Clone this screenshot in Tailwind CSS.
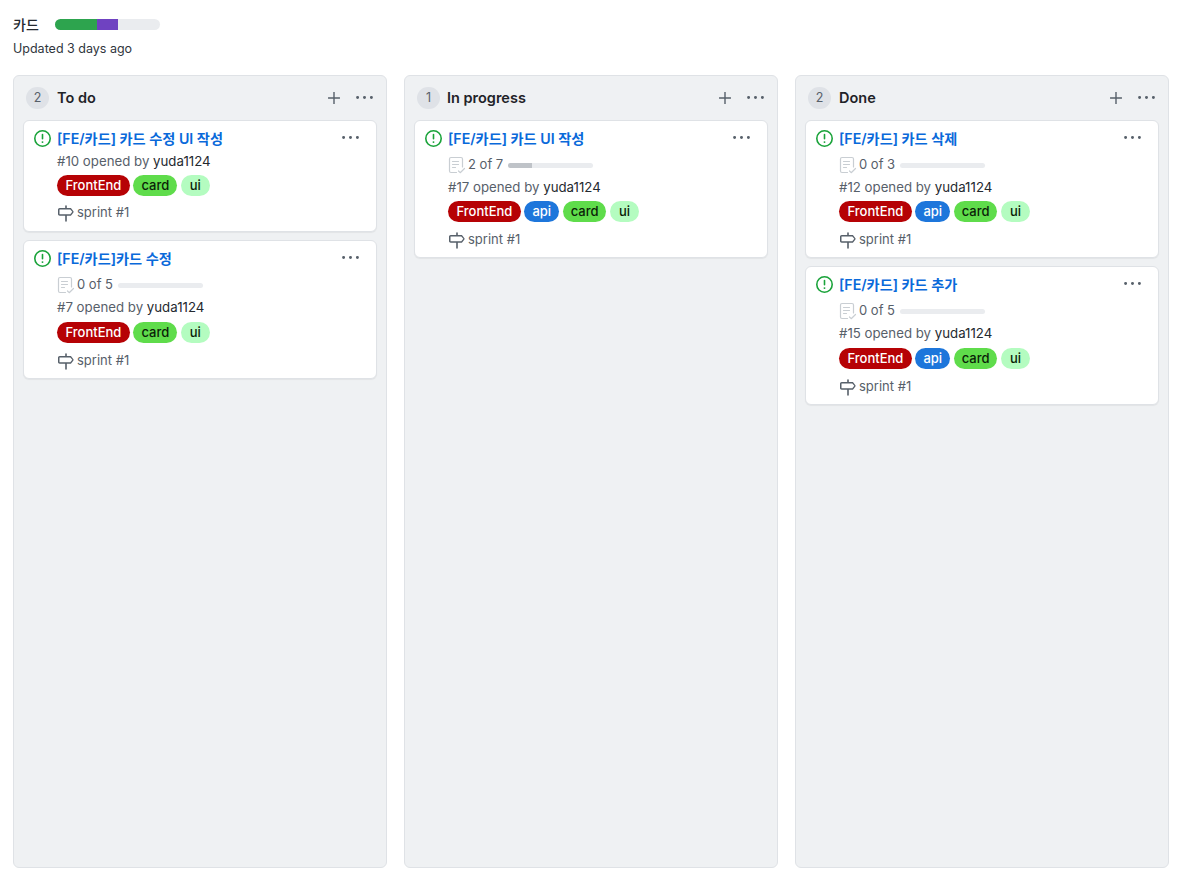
<!DOCTYPE html>
<html lang="ko">
<head>
    <meta charset="UTF-8">
    <title>카드</title>
    <script src="https://cdn.jsdelivr.net/npm/@tailwindcss/browser@4"></script>
</head>
<body class="h-[880px] overflow-hidden bg-white text-[#24292f] font-['Inter','Noto_Sans_CJK_KR',sans-serif] antialiased">
    <svg class="hidden">
        <symbol id="issue" viewBox="0 0 16 16"><path fill="currentColor" d="M8 0a8 8 0 1 1 0 16A8 8 0 0 1 8 0ZM1.500 8a6.500 6.500 0 1 0 13 0 6.500 6.500 0 0 0-13 0Zm5.600 3.400a.9.9 0 1 1 1.800 0 .9.9 0 0 1-1.800 0ZM7.250 4.250a.75.75 0 0 1 1.500 0v4a.75.75 0 0 1-1.500 0Z"/></symbol>
        <symbol id="kebab" viewBox="0 0 16 16"><path fill="currentColor" d="M8 9.400a1.400 1.400 0 1 0 0-2.800 1.400 1.400 0 0 0 0 2.800ZM1.500 9.400a1.400 1.400 0 1 0 0-2.800 1.400 1.400 0 0 0 0 2.800Zm13 0a1.400 1.400 0 1 0 0-2.800 1.400 1.400 0 0 0 0 2.800Z"/></symbol>
        <symbol id="plus" viewBox="0 0 16 16"><path fill="currentColor" d="M7.200 1.200h1.600v6h6v1.600h-6v6H7.200v-6h-6V7.200h6Z"/></symbol>
        <symbol id="milestone" viewBox="0 0 16 16"><path fill="currentColor" fill-rule="evenodd" d="M7.200.6a.8.8 0 0 1 1.600 0V2.500h3.600c.3 0 .5.1.7.3l2.300 3c.3.3.3.8 0 1.100l-2.300 3c-.2.2-.4.3-.7.3H8.800v5.200a.8.8 0 0 1-1.600 0v-5.200H1.700C.8 10.200 0 9.400 0 8.500V4.200c0-.9.8-1.700 1.700-1.700h5.500ZM1.700 4c-.1 0-.2.1-.2.2v4.300c0 .1.100.2.200.2h10.600l2-2.350-2-2.350Z"/></symbol>
        <symbol id="tasks" viewBox="0 0 18 18"><path fill="none" stroke="currentColor" stroke-width="1.200" stroke-linecap="round" stroke-linejoin="round" d="M8.500 16.500H3c-.8 0-1.500-.7-1.500-1.500V3c0-.8.7-1.500 1.500-1.500h10c.8 0 1.500.7 1.500 1.500v8M4.500 5.500h6M4.500 8.500h6M4.500 11.500h3M10.500 15l1.700 1.700 4.300-4.200"/></symbol>
    </svg>

    <div class="h-[75px] px-[13px]">
        <div class="flex items-center h-[49px] pb-[1px]">
            <h3 class="text-[14px] font-medium w-[42px]">카드</h3>
            <div class="flex w-[105px] h-[11px] rounded-full overflow-hidden bg-[#eaecef]">
                <span class="w-[42px] bg-[#2da44e]"></span>
                <span class="w-[21px] bg-[#6f42c1]"></span>
            </div>
        </div>
        <p class="text-[12.5px] leading-[16px] text-[#30363d] -mt-[8px]">Updated 3 days ago</p>
    </div>

    <div class="flex gap-[17px] px-[13px]">

        <!-- To do -->
        <section class="shrink-0 w-[374px] h-[793px] bg-[#eff1f3] border border-[#dfe2e6] rounded-md">
            <header class="flex items-center h-[44px] pl-[12px] pr-[13px]">
                <span class="flex items-center justify-center w-[23px] h-[22px] rounded-full bg-[#dfe2e7] text-[12.5px] text-[#57606a]">2</span>
                <h4 class="ml-[8px] text-[14.5px] font-semibold text-[#1f2328]">To do</h4>
                <svg class="ml-auto w-[14px] h-[14px] text-[#57606a]"><use href="#plus"/></svg>
                <svg class="ml-[15px] -mt-[2px] w-[17px] h-[17px] text-[#57606a]"><use href="#kebab"/></svg>
            </header>
            <div class="flex flex-col gap-[8px] px-[9px]">
                <article class="relative h-[112px] bg-white border border-[#dfe2e6] rounded-md shadow-[0_1px_1px_rgba(31,35,40,0.06)] pl-[33px] pt-[7px]">
                    <svg class="absolute left-[10px] top-[9px] w-[17px] h-[17px] text-[#1aa33a]"><use href="#issue"/></svg>
                    <svg class="absolute right-[17px] top-[8px] w-[17px] h-[17px] text-[#57606a]"><use href="#kebab"/></svg>
                    <a class="block h-[21px] leading-[21px] text-[14.2px] font-semibold text-[#0969da]">[FE/카드] 카드 수정 UI 작성</a>
                    <p class="mt-[2px] h-[20px] leading-[20px] text-[13.25px] text-[#57606a]">#10 opened by <span class="text-[#24292f]">yuda1124</span></p>
                    <div class="flex gap-[3.5px] mt-[4px]">
                        <span class="flex items-center h-[21px] px-[8.5px] rounded-full bg-[#b60205] text-white text-[13px] font-medium">FrontEnd</span>
                        <span class="flex items-center h-[21px] px-[8px] rounded-full bg-[#5fdc4b] text-[#0b1f08] text-[13px] font-medium">card</span>
                        <span class="flex items-center h-[21px] px-[9px] rounded-full bg-[#b4fcc0] text-[#0b1f08] text-[13px] font-medium">ui</span>
                    </div>
                    <div class="flex items-center gap-[3px] mt-[8px] h-[18px] text-[13px] text-[#57606a]"><svg class="ml-[1px] w-[16px] h-[17px] text-[#57606a]"><use href="#milestone"/></svg>sprint #1</div>
                </article>
                <article class="relative h-[139px] bg-white border border-[#dfe2e6] rounded-md shadow-[0_1px_1px_rgba(31,35,40,0.06)] pl-[33px] pt-[7px]">
                    <svg class="absolute left-[10px] top-[9px] w-[17px] h-[17px] text-[#1aa33a]"><use href="#issue"/></svg>
                    <svg class="absolute right-[17px] top-[8px] w-[17px] h-[17px] text-[#57606a]"><use href="#kebab"/></svg>
                    <a class="block h-[21px] leading-[21px] text-[14.2px] font-semibold text-[#0969da]">[FE/카드]카드 수정</a>
                    <div class="flex items-center mt-[6px] h-[20px] text-[13px] text-[#57606a]">
                        <svg class="w-[18px] h-[18px] text-[#c9ced3]"><use href="#tasks"/></svg>
                        <span class="ml-[2px] w-[41px]">0 of 5</span>
                        <span class="w-[85px] h-[5px] rounded-full bg-[#eaecef]"></span>
                    </div>
                    <p class="mt-[2px] h-[20px] leading-[20px] text-[13.25px] text-[#57606a]">#7 opened by <span class="text-[#24292f]">yuda1124</span></p>
                    <div class="flex gap-[3.5px] mt-[5px]">
                        <span class="flex items-center h-[21px] px-[8.5px] rounded-full bg-[#b60205] text-white text-[13px] font-medium">FrontEnd</span>
                        <span class="flex items-center h-[21px] px-[8px] rounded-full bg-[#5fdc4b] text-[#0b1f08] text-[13px] font-medium">card</span>
                        <span class="flex items-center h-[21px] px-[9px] rounded-full bg-[#b4fcc0] text-[#0b1f08] text-[13px] font-medium">ui</span>
                    </div>
                    <div class="flex items-center gap-[3px] mt-[9px] h-[18px] text-[13px] text-[#57606a]"><svg class="ml-[1px] w-[16px] h-[17px] text-[#57606a]"><use href="#milestone"/></svg>sprint #1</div>
                </article>
            </div>
        </section>

        <!-- In progress -->
        <section class="shrink-0 w-[374px] h-[793px] bg-[#eff1f3] border border-[#dfe2e6] rounded-md">
            <header class="flex items-center h-[44px] pl-[12px] pr-[13px]">
                <span class="flex items-center justify-center w-[23px] h-[22px] rounded-full bg-[#dfe2e7] text-[12.5px] text-[#57606a]">1</span>
                <h4 class="ml-[7px] text-[14.5px] font-semibold text-[#1f2328]">In progress</h4>
                <svg class="ml-auto w-[14px] h-[14px] text-[#57606a]"><use href="#plus"/></svg>
                <svg class="ml-[15px] -mt-[2px] w-[17px] h-[17px] text-[#57606a]"><use href="#kebab"/></svg>
            </header>
            <div class="flex flex-col gap-[8px] px-[9px]">
                <article class="relative h-[138px] bg-white border border-[#dfe2e6] rounded-md shadow-[0_1px_1px_rgba(31,35,40,0.06)] pl-[33px] pt-[7px]">
                    <svg class="absolute left-[10px] top-[9px] w-[17px] h-[17px] text-[#1aa33a]"><use href="#issue"/></svg>
                    <svg class="absolute right-[17px] top-[8px] w-[17px] h-[17px] text-[#57606a]"><use href="#kebab"/></svg>
                    <a class="block h-[21px] leading-[21px] text-[14.2px] font-semibold text-[#0969da]">[FE/카드] 카드 UI 작성</a>
                    <div class="flex items-center mt-[6px] h-[20px] text-[13px] text-[#57606a]">
                        <svg class="w-[18px] h-[18px] text-[#c9ced3]"><use href="#tasks"/></svg>
                        <span class="ml-[2px] w-[40px]">2 of 7</span>
                        <span class="flex w-[85px] h-[5px] rounded-full overflow-hidden bg-[#eaecef]"><span class="w-[24px] bg-[#bfc3c8]"></span></span>
                    </div>
                    <p class="mt-[2px] h-[20px] leading-[20px] text-[13.25px] text-[#57606a]">#17 opened by <span class="text-[#24292f]">yuda1124</span></p>
                    <div class="flex gap-[3.5px] mt-[4px]">
                        <span class="flex items-center h-[21px] px-[8.5px] rounded-full bg-[#b60205] text-white text-[13px] font-medium">FrontEnd</span>
                        <span class="flex items-center h-[21px] px-[8px] rounded-full bg-[#1d76db] text-white text-[13px] font-medium">api</span>
                        <span class="flex items-center h-[21px] px-[8px] rounded-full bg-[#5fdc4b] text-[#0b1f08] text-[13px] font-medium">card</span>
                        <span class="flex items-center h-[21px] px-[9px] rounded-full bg-[#b4fcc0] text-[#0b1f08] text-[13px] font-medium">ui</span>
                    </div>
                    <div class="flex items-center gap-[3px] mt-[9px] h-[18px] text-[13px] text-[#57606a]"><svg class="ml-[1px] w-[16px] h-[17px] text-[#57606a]"><use href="#milestone"/></svg>sprint #1</div>
                </article>
            </div>
        </section>

        <!-- Done -->
        <section class="shrink-0 w-[374px] h-[793px] bg-[#eff1f3] border border-[#dfe2e6] rounded-md">
            <header class="flex items-center h-[44px] pl-[12px] pr-[13px]">
                <span class="flex items-center justify-center w-[23px] h-[22px] rounded-full bg-[#dfe2e7] text-[12.5px] text-[#57606a]">2</span>
                <h4 class="ml-[8px] text-[14.5px] font-semibold text-[#1f2328]">Done</h4>
                <svg class="ml-auto w-[14px] h-[14px] text-[#57606a]"><use href="#plus"/></svg>
                <svg class="ml-[15px] -mt-[2px] w-[17px] h-[17px] text-[#57606a]"><use href="#kebab"/></svg>
            </header>
            <div class="flex flex-col gap-[8px] px-[9px]">
                <article class="relative h-[138px] bg-white border border-[#dfe2e6] rounded-md shadow-[0_1px_1px_rgba(31,35,40,0.06)] pl-[33px] pt-[7px]">
                    <svg class="absolute left-[10px] top-[9px] w-[17px] h-[17px] text-[#1aa33a]"><use href="#issue"/></svg>
                    <svg class="absolute right-[17px] top-[8px] w-[17px] h-[17px] text-[#57606a]"><use href="#kebab"/></svg>
                    <a class="block h-[21px] leading-[21px] text-[14.2px] font-semibold text-[#0969da]">[FE/카드] 카드 삭제</a>
                    <div class="flex items-center mt-[6px] h-[20px] text-[13px] text-[#57606a]">
                        <svg class="w-[18px] h-[18px] text-[#c9ced3]"><use href="#tasks"/></svg>
                        <span class="ml-[2px] w-[41px]">0 of 3</span>
                        <span class="w-[85px] h-[5px] rounded-full bg-[#eaecef]"></span>
                    </div>
                    <p class="mt-[2px] h-[20px] leading-[20px] text-[13.25px] text-[#57606a]">#12 opened by <span class="text-[#24292f]">yuda1124</span></p>
                    <div class="flex gap-[3.5px] mt-[4px]">
                        <span class="flex items-center h-[21px] px-[8.5px] rounded-full bg-[#b60205] text-white text-[13px] font-medium">FrontEnd</span>
                        <span class="flex items-center h-[21px] px-[8px] rounded-full bg-[#1d76db] text-white text-[13px] font-medium">api</span>
                        <span class="flex items-center h-[21px] px-[8px] rounded-full bg-[#5fdc4b] text-[#0b1f08] text-[13px] font-medium">card</span>
                        <span class="flex items-center h-[21px] px-[9px] rounded-full bg-[#b4fcc0] text-[#0b1f08] text-[13px] font-medium">ui</span>
                    </div>
                    <div class="flex items-center gap-[3px] mt-[9px] h-[18px] text-[13px] text-[#57606a]"><svg class="ml-[1px] w-[16px] h-[17px] text-[#57606a]"><use href="#milestone"/></svg>sprint #1</div>
                </article>
                <article class="relative h-[139px] bg-white border border-[#dfe2e6] rounded-md shadow-[0_1px_1px_rgba(31,35,40,0.06)] pl-[33px] pt-[7px]">
                    <svg class="absolute left-[10px] top-[9px] w-[17px] h-[17px] text-[#1aa33a]"><use href="#issue"/></svg>
                    <svg class="absolute right-[17px] top-[8px] w-[17px] h-[17px] text-[#57606a]"><use href="#kebab"/></svg>
                    <a class="block h-[21px] leading-[21px] text-[14.2px] font-semibold text-[#0969da]">[FE/카드] 카드 추가</a>
                    <div class="flex items-center mt-[6px] h-[20px] text-[13px] text-[#57606a]">
                        <svg class="w-[18px] h-[18px] text-[#c9ced3]"><use href="#tasks"/></svg>
                        <span class="ml-[2px] w-[41px]">0 of 5</span>
                        <span class="w-[85px] h-[5px] rounded-full bg-[#eaecef]"></span>
                    </div>
                    <p class="mt-[2px] h-[20px] leading-[20px] text-[13.25px] text-[#57606a]">#15 opened by <span class="text-[#24292f]">yuda1124</span></p>
                    <div class="flex gap-[3.5px] mt-[5px]">
                        <span class="flex items-center h-[21px] px-[8.5px] rounded-full bg-[#b60205] text-white text-[13px] font-medium">FrontEnd</span>
                        <span class="flex items-center h-[21px] px-[8px] rounded-full bg-[#1d76db] text-white text-[13px] font-medium">api</span>
                        <span class="flex items-center h-[21px] px-[8px] rounded-full bg-[#5fdc4b] text-[#0b1f08] text-[13px] font-medium">card</span>
                        <span class="flex items-center h-[21px] px-[9px] rounded-full bg-[#b4fcc0] text-[#0b1f08] text-[13px] font-medium">ui</span>
                    </div>
                    <div class="flex items-center gap-[3px] mt-[9px] h-[18px] text-[13px] text-[#57606a]"><svg class="ml-[1px] w-[16px] h-[17px] text-[#57606a]"><use href="#milestone"/></svg>sprint #1</div>
                </article>
            </div>
        </section>
    </div>
</body>
</html>
